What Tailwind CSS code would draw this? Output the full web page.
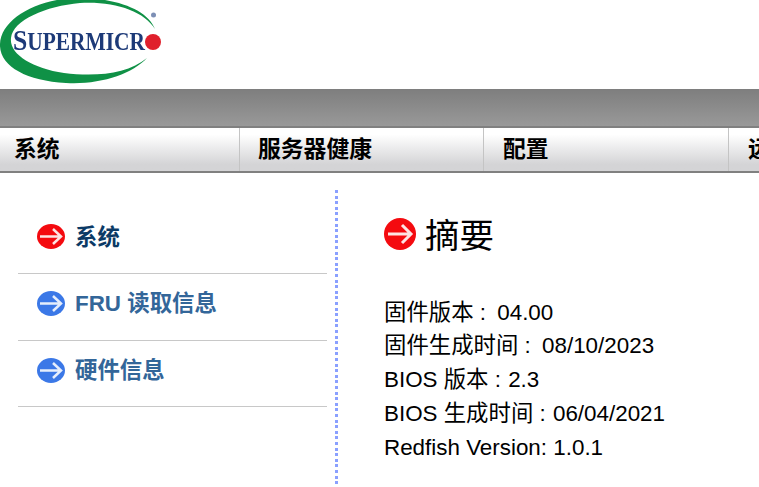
<!DOCTYPE html>
<html lang="zh">
<head>
  <meta charset="UTF-8" />
  <title>Supermicro BMC</title>
  <script src="https://cdn.jsdelivr.net/npm/@tailwindcss/browser@4"></script>
</head>
<body class="h-[487px] w-[759px] overflow-hidden bg-white font-['Liberation_Sans','Noto_Sans_CJK_SC',sans-serif] text-black">

  <!-- Logo -->
  <header class="relative h-[89px]">
    <svg class="absolute left-0 top-0 blur-[0.6px]" width="180" height="89" viewBox="0 0 180 89">
      <path d="M155 29C148 10 116 -3 74 -2C34 0 1 20 0 44C-1 66 26 81 66 83C100 85 132 74 147 58C128 74 96 77 64 73C32 68 9 54 11 38C13 20 46 6 80 3C114 1 144 11 155 29Z" fill="#0f9146"/>
      <circle cx="153.500" cy="15" r="2.500" fill="#7d8fb5"/>
      <circle cx="153" cy="42" r="8" fill="#e0202c"/>
      <text x="13" y="50" font-family="Liberation Serif" font-weight="700" font-size="30" textLength="132" lengthAdjust="spacingAndGlyphs" fill="#1d3a78">S<tspan font-size="25">UPERMICR</tspan></text>
    </svg>
  </header>

  <div class="h-[37px] bg-gradient-to-b from-[#7e7e7e] to-[#999999]"></div>

  <!-- Tabs -->
  <nav class="flex h-[47px] overflow-hidden border-y-2 border-[#808080] bg-gradient-to-b from-white from-15% to-[#d4d4d6] to-85% text-[22.800px] font-bold leading-[43px]">
    <a class="w-[240px] shrink-0 border-r border-[#c4c4c4] pl-[14px]">系统</a>
    <a class="w-[244px] shrink-0 border-r border-[#c4c4c4] pl-[18px]">服务器健康</a>
    <a class="w-[245px] shrink-0 border-r border-[#c4c4c4] pl-[19px]">配置</a>
    <a class="w-[100px] shrink-0 whitespace-nowrap pl-[19px]">远程控制</a>
  </nav>

  <div class="flex pt-[17px]">
    <!-- Side menu -->
    <aside class="w-[328px] shrink-0 pl-[18px] pr-px pt-[13px] text-[22.400px] font-bold">
      <a class="flex h-[71px] items-start gap-[10px] border-b border-[#c8c8c8] pl-[19px] pt-[20px] leading-[30px] text-[#0b3a66]">
        <svg class="mt-px blur-[0.3px]" width="28" height="25" viewBox="0 0 28 25"><ellipse cx="14" cy="12.500" rx="14" ry="12.500" fill="#f40a0f"/><path d="M3 12.500H24M16 5L24 12.500L16 20" fill="none" stroke="#fde3e3" stroke-width="2.500"/></svg>
        系统
      </a>
      <a class="flex h-[67px] items-start gap-[10px] border-b border-[#c8c8c8] pl-[19px] pt-[15px] leading-[30px] text-[#336699]">
        <svg class="mt-[2px] blur-[0.3px]" width="28" height="25" viewBox="0 0 28 25"><ellipse cx="14" cy="12.500" rx="14" ry="12.500" fill="#3b78e7"/><path d="M3 12.500H24M16 5L24 12.500L16 20" fill="none" stroke="#e6eefc" stroke-width="2.500"/></svg>
        FRU 读取信息
      </a>
      <a class="flex h-[66px] items-start gap-[10px] border-b border-[#c8c8c8] pl-[19px] pt-[15px] leading-[30px] text-[#336699]">
        <svg class="mt-[2px] blur-[0.3px]" width="28" height="25" viewBox="0 0 28 25"><ellipse cx="14" cy="12.500" rx="14" ry="12.500" fill="#3b78e7"/><path d="M3 12.500H24M16 5L24 12.500L16 20" fill="none" stroke="#e6eefc" stroke-width="2.500"/></svg>
        硬件信息
      </a>
    </aside>

    <div class="ml-[6.500px] h-[300px] w-[3px] blur-[0.3px] bg-[repeating-linear-gradient(to_bottom,#8aa0ff_0,#8aa0ff_3px,transparent_3px,transparent_5.600px)]"></div>

    <!-- Summary -->
    <main class="pl-[46.500px] pt-[23px]">
      <h1 class="flex items-center gap-[9px] text-[34.500px] font-normal leading-[46px]">
        <svg class="-mt-[4px] blur-[0.3px]" width="32" height="32" viewBox="0 0 32 32"><circle cx="16" cy="16" r="16" fill="#f40a0f"/><path d="M4 16H27M18 7L27 16L18 25" fill="none" stroke="#fde3e3" stroke-width="3"/></svg>
        摘要
      </h1>
      <div class="mt-[36.500px] whitespace-nowrap text-[22.400px] leading-[33.800px]">
        <p>固件版本 : <span class="ml-[5px]">04.00</span></p>
        <p>固件生成时间 : <span class="ml-[5px]">08/10/2023</span></p>
        <p>BIOS 版本 : <span class="ml-px">2.3</span></p>
        <p>BIOS 生成时间 : <span class="ml-px">06/04/2021</span></p>
        <p>Redfish Version: 1.0.1</p>
      </div>
    </main>
  </div>
</body>
</html>
